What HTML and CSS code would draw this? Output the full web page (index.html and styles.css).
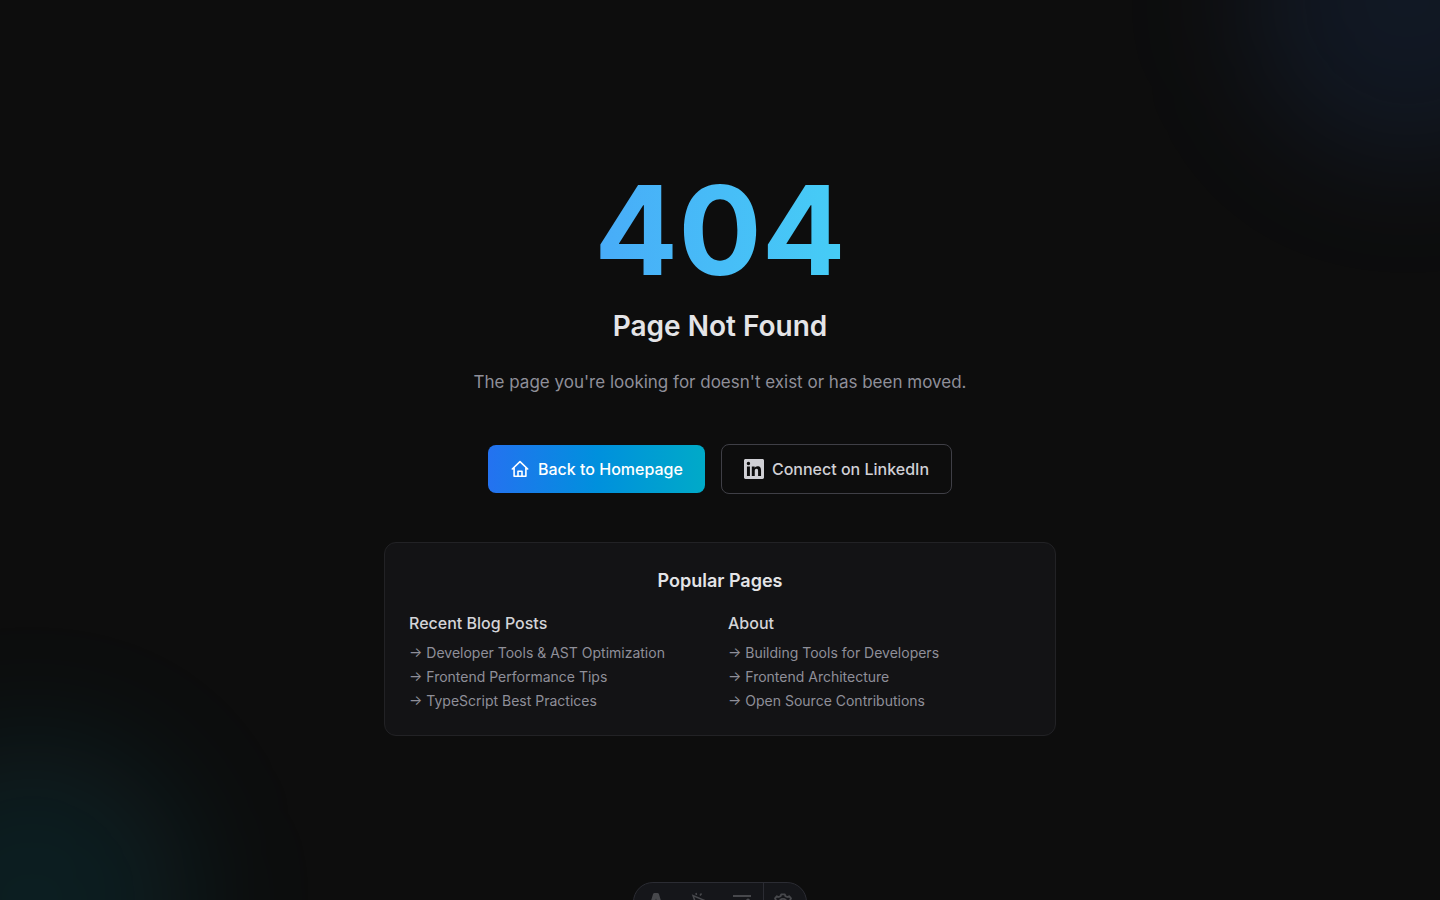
FILE: index.html
```html
<!DOCTYPE html>
<html lang="en">
<head>
<meta charset="utf-8">
<meta name="viewport" content="width=device-width, initial-scale=1">
<title>404 - Page Not Found</title>
<link rel="stylesheet" href="styles.css">
</head>
<body>
<main class="page">
  <div class="glow glow-blue"></div>
  <div class="glow glow-cyan"></div>
  <div class="content">
    <h1 class="code">404</h1>
    <h2 class="title">Page Not Found</h2>
    <p class="message">The page you're looking for doesn't exist or has been moved.</p>
    <div class="actions">
      <a class="button button-primary" href="#">
        <svg class="icon" viewBox="0 0 20 20" fill="none" stroke="currentColor" stroke-width="1.6" stroke-linejoin="round" stroke-linecap="round"><path d="M2.3 10 10 2.6 17.7 10M4.1 8.6V17.2H15.9V8.6M8 17V12.2H12V17"/></svg>
        Back to Homepage
      </a>
      <a class="button button-outline" href="#">
        <svg class="icon" viewBox="0 0 24 24" fill="currentColor"><path d="M20.447 20.452h-3.554v-5.569c0-1.328-.027-3.037-1.852-3.037-1.853 0-2.136 1.445-2.136 2.939v5.667H9.351V9h3.414v1.561h.046c.477-.9 1.637-1.85 3.37-1.85 3.601 0 4.267 2.37 4.267 5.455v6.286zM5.337 7.433a2.062 2.062 0 0 1-2.063-2.065 2.064 2.064 0 1 1 2.063 2.065zm1.782 13.019H3.555V9h3.564v11.452zM22.225 0H1.771C.792 0 0 .774 0 1.729v20.542C0 23.227.792 24 1.771 24h20.451C23.2 24 24 23.227 24 22.271V1.729C24 .774 23.2 0 22.222 0h.003z"/></svg>
        Connect on LinkedIn
      </a>
    </div>
    <section class="card">
      <h3 class="card-title">Popular Pages</h3>
      <div class="columns">
        <div>
          <h4 class="group-title">Recent Blog Posts</h4>
          <ul class="links">
            <li><a href="#">→ Developer Tools &amp; AST Optimization</a></li>
            <li><a href="#">→ Frontend Performance Tips</a></li>
            <li><a href="#">→ TypeScript Best Practices</a></li>
          </ul>
        </div>
        <div>
          <h4 class="group-title">About</h4>
          <ul class="links">
            <li><a href="#">→ Building Tools for Developers</a></li>
            <li><a href="#">→ Frontend Architecture</a></li>
            <li><a href="#">→ Open Source Contributions</a></li>
          </ul>
        </div>
      </div>
    </section>
  </div>
</main>
<div class="toolbar">
  <button class="tool" aria-label="Menu"><svg viewBox="0 0 20 20" fill="currentColor"><path d="M2.5 17 7 2.2Q7.4 1 8.6 1H11.4Q12.6 1 13 2.2L17.5 17 12.2 14.5 10 6.5 7.8 14.5Z"/></svg></button>
  <button class="tool" aria-label="Inspect"><svg viewBox="0 0 20 20" fill="none" stroke="currentColor" stroke-width="1.5"><path d="M9 18 4 3.5 18 9.5 12 12ZM7.5 3 7 1M11 3.5 12.5 1.5"/></svg></button>
  <button class="tool" aria-label="Audit"><svg viewBox="0 0 20 20" fill="none" stroke="currentColor" stroke-width="2"><path d="M1 4H19M1 11H11M14 9 16 7.5 18 9"/></svg></button>
  <button class="tool tool-settings" aria-label="Settings"><svg viewBox="0 0 20 20" fill="none" stroke="currentColor" stroke-width="1.8" stroke-linejoin="round"><path d="M7.6 4.2 8.2 2.4H11.8L12.4 4.2 14.3 5 16.1 4.2 18 6.4 17 8.2 17.5 10 18.6 11V13L17.2 14 3 14 1.4 13V11L2.5 10 3 8.2 2 6.4 3.9 4.2 5.7 5Z"/><circle cx="10" cy="11" r="4.2"/></svg></button>
</div>
</body>
</html>
```
FILE: styles.css
```css
* { box-sizing: border-box; margin: 0; padding: 0; }
body {
  background: #0d0d0d;
  color: #e4e4e7;
  font-family: Inter, "Liberation Sans", sans-serif;
  font-size: 16px;
  line-height: 24px;
}
a { color: inherit; text-decoration: none; }
.page {
  position: relative;
  display: flex;
  align-items: center;
  justify-content: center;
  min-height: 100vh;
  padding: 16px;
  overflow: hidden;
}
.glow {
  position: absolute;
  width: 320px;
  height: 320px;
  border-radius: 50%;
  filter: blur(64px);
}
.glow-blue { top: -160px; right: -128px; background: rgba(59, 130, 246, 0.1); }
.glow-cyan { bottom: -160px; left: -128px; background: rgba(6, 182, 212, 0.1); }
.content {
  position: relative;
  width: 100%;
  max-width: 672px;
  text-align: center;
}
.code {
  margin-bottom: 12px;
  font-size: 124px;
  line-height: 132px;
  font-weight: 700;
  color: transparent;
  background: linear-gradient(to right, #4a8ffa, #44eaf4);
  -webkit-background-clip: text;
  background-clip: text;
}
.title { margin-bottom: 24px; font-size: 28px; line-height: 36px; font-weight: 600; }
.message { margin-bottom: 48px; font-size: 17px; line-height: 28px; color: #8f8f99; }
.actions {
  display: flex;
  flex-wrap: wrap;
  align-items: center;
  justify-content: center;
  gap: 16px;
  margin-bottom: 48px;
}
.button {
  display: inline-flex;
  align-items: center;
  gap: 8px;
  padding: 12px 22px;
  border-radius: 8px;
  font-weight: 500;
}
.button-primary { color: #fff; background: linear-gradient(to right, #2472f0, #0090dd 50%, #00aac8); }
.button-outline { border: 1px solid #3f3f46; color: #d0d0d5; }
.icon { width: 20px; height: 20px; }
.card {
  padding: 24px;
  border: 1px solid #222225;
  border-radius: 12px;
  background: #131315;
}
.card-title { margin-bottom: 16px; font-size: 18px; line-height: 28px; font-weight: 600; }
.columns { display: grid; grid-template-columns: 1fr 1fr; gap: 16px; text-align: left; }
.group-title { margin-bottom: 8px; font-weight: 500; color: #d4d4d8; }
.links { display: grid; gap: 4px; list-style: none; font-size: 14px; line-height: 20px; color: #8f8f99; }
.toolbar {
  position: fixed;
  bottom: -22px;
  left: 50%;
  display: flex;
  height: 40px;
  overflow: hidden;
  border: 1px solid #2b2c33;
  border-radius: 20px;
  background: #15161a;
  color: #47484c;
  transform: translateX(-50%);
}
.tool { display: flex; align-items: center; justify-content: center; width: 43px; border: 0; background: none; color: inherit; }
.tool svg { width: 20px; height: 20px; }
.tool-settings { padding-right: 4px; border-left: 1px solid #2b2c33; }
```
